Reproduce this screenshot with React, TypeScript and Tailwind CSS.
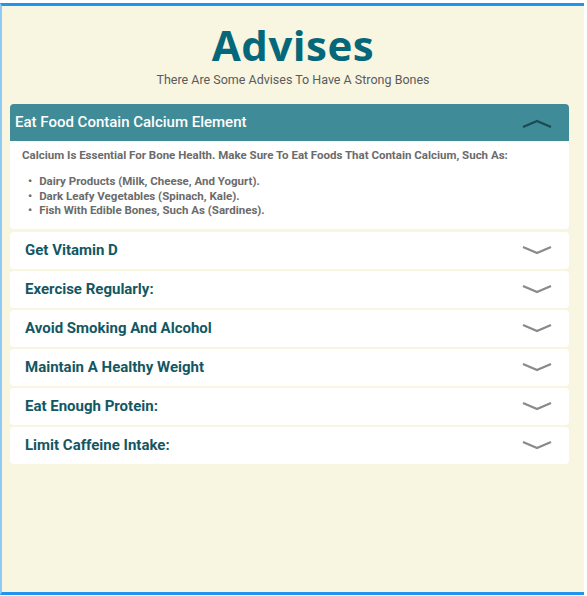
import React, { useState } from 'react';

const items = [
  'Eat Food Contain Calcium Element',
  'Get Vitamin D',
  'Exercise Regularly:',
  'Avoid Smoking And Alcohol',
  'Maintain A Healthy Weight',
  'Eat Enough Protein:',
  'Limit Caffeine Intake:',
];

const Chevron = ({ up, className }: { up?: boolean; className: string }) => (
  <svg width="32" height="12" viewBox="0 0 32 12" className={className}>
    <polyline
      points={up ? '2,10 16,4 30,10' : '2,3 16,9 30,3'}
      fill="none"
      stroke="currentColor"
      strokeWidth="2.4"
      strokeLinejoin="round"
    />
  </svg>
);

export default function App() {
  const [open, setOpen] = useState(0);

  return (
    <div className="w-[584px] h-[596px] pt-[3px] font-['Roboto',sans-serif]">
      <div className="h-[592px] bg-[#f8f5e1] border-t-[3px] border-b-[3px] border-l-[2px] border-t-[#1f95f0] border-b-[#1f95f0] border-l-[#8fcaf5] flex flex-col">
        <div className="flex flex-col items-center pt-[17px]">
          <h1 className="text-[42px] leading-[44px] font-bold text-[#05687a] font-['Open_Sans',sans-serif] tracking-[0.5px]">
            Advises
          </h1>
          <p className="text-[12.5px] leading-[16px] text-[#5b5b5b] mt-[5px]">There Are Some Advises To Have A Strong Bones</p>
        </div>

        <div className="flex flex-col gap-[2px] ml-[8px] mr-[15px] mt-[16px]">
          {items.map((title, i) =>
            open === i ? (
              <div key={title} className="flex flex-col mb-[1px]">
                <button
                  onClick={() => setOpen(-1)}
                  className="h-[37px] bg-[#3f8b98] rounded-t-[4px] flex items-center justify-between pl-[5px] pr-[16px] text-white text-[15px] font-medium"
                >
                  <span>{title}</span>
                  <Chevron up className="text-[#1c4a52]" />
                </button>
                <div className="bg-white rounded-b-[4px] px-[12px] pt-[7px] pb-[11px] text-[11.5px] font-bold text-[#6b6b6b] leading-[14.5px]">
                  <p>Calcium Is Essential For Bone Health. Make Sure To Eat Foods That Contain Calcium, Such As:</p>
                  <ul className="mt-[11.5px] pl-[6px]">
                    <li className="flex gap-[7px]"><span>•</span>Dairy Products (Milk, Cheese, And Yogurt).</li>
                    <li className="flex gap-[7px]"><span>•</span>Dark Leafy Vegetables (Spinach, Kale).</li>
                    <li className="flex gap-[7px]"><span>•</span>Fish With Edible Bones, Such As (Sardines).</li>
                  </ul>
                </div>
              </div>
            ) : (
              <button
                key={title}
                onClick={() => setOpen(i)}
                className="h-[37px] bg-white rounded-[4px] flex items-center justify-between pl-[15px] pr-[16px] text-[15px] font-bold text-[#135763]"
              >
                <span>{title}</span>
                <Chevron className="text-[#8a8a8a]" />
              </button>
            )
          )}
        </div>
      </div>
    </div>
  );
}
